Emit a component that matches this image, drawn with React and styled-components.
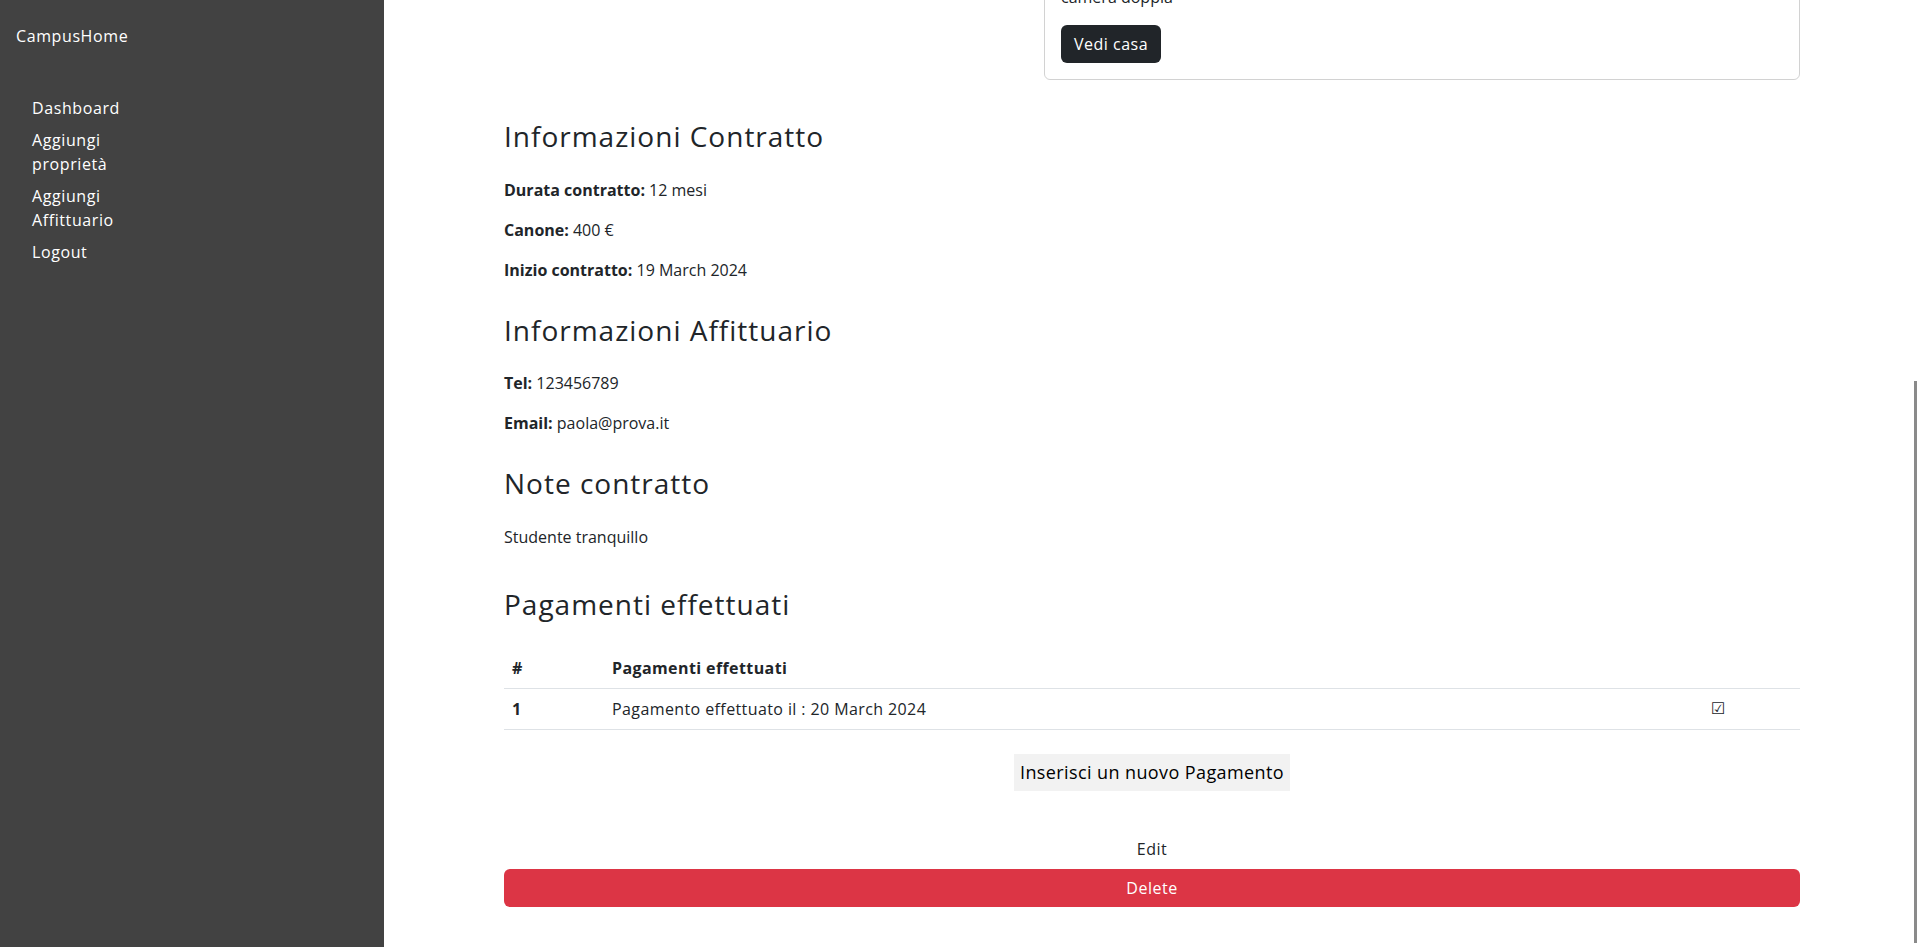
import React, { useLayoutEffect, useRef } from 'react';
import styled, { createGlobalStyle } from 'styled-components';

const GlobalStyle = createGlobalStyle`
  html, body {
    margin: 0;
    padding: 0;
    height: 100%;
  }
  body {
    font-family: "Open Sans", "DejaVu Sans", sans-serif;
    font-size: 16px;
    line-height: 1.5;
    color: #212529;
    background: #fff;
  }
  *, *::before, *::after {
    box-sizing: border-box;
  }
`;

const Layout = styled.div`
  position: relative;
  display: flex;
  height: 100vh;
  overflow: hidden;
`;

const Sidebar = styled.aside`
  flex: 0 0 384px;
  background: #424242;
  color: #fff;
  padding: 24px 16px;
  letter-spacing: 0.6px;
`;

const Brand = styled.div`
  font-size: 16px;
  line-height: 24px;
`;

const NavList = styled.ul`
  list-style: none;
  margin: 48px 0 0;
  padding: 0 0 0 16px;
  display: flex;
  flex-direction: column;
  gap: 8px;
`;

const NavLink = styled.a`
  display: block;
  max-width: 110px;
  color: #fff;
  text-decoration: none;
  line-height: 24px;
  cursor: pointer;
`;

const Main = styled.main`
  flex: 1;
  overflow-y: auto;
`;

/* thin overlay scroll indicator, as the reference shows it */
const ScrollThumb = styled.div`
  position: absolute;
  right: 3px;
  top: 381px;
  width: 3px;
  height: 562px;
  background: #8a8a8a;
  pointer-events: none;
`;

const Container = styled.div`
  max-width: 1320px;
  margin: 0 auto;
  padding: 24px 12px 40px;
`;

const TopRow = styled.div`
  display: grid;
  grid-template-columns: 1fr 756px;
  gap: 24px;
  margin-bottom: 40px;
`;

const PageTitle = styled.h1`
  font-size: 40px;
  line-height: 1.2;
  font-weight: 500;
  margin: 0 0 8px;
`;

const Subtitle = styled.p`
  margin: 0;
  color: #6c757d;
`;

const Card = styled.div`
  border: 1px solid rgba(0, 0, 0, 0.175);
  border-radius: 6px;
  overflow: hidden;
`;

const CardImage = styled.div`
  height: 400px;
  background: #e9ecef;
`;

const CardBody = styled.div`
  padding: 16px;
`;

const CardTitle = styled.h5`
  font-size: 20px;
  line-height: 1.2;
  font-weight: 500;
  margin: 0 0 8px;
`;

const CardText = styled.p`
  margin: 0 0 16px;
`;

const Button = styled.button`
  font-family: inherit;
  font-size: 16px;
  line-height: 24px;
  letter-spacing: 0.5px;
  padding: 6px 12px;
  border: 1px solid transparent;
  border-radius: 6px;
  cursor: pointer;
  background: ${p => (p.$variant === 'dark' ? '#212529' : p.$variant === 'danger' ? '#dc3545' : 'transparent')};
  color: ${p => (p.$variant === 'dark' || p.$variant === 'danger' ? '#fff' : '#212529')};
  width: ${p => (p.$block ? '100%' : 'auto')};
`;

const Section = styled.section`
  display: flex;
  flex-direction: column;
  & + & {
    margin-top: 16px;
  }
`;

const Heading = styled.h3`
  font-size: 28px;
  line-height: 1.2;
  font-weight: 500;
  letter-spacing: 1px;
  margin: 0 0 24px;
`;

const Para = styled.p`
  margin: 0 0 ${p => p.$mb || 16}px;
`;

const Table = styled.table`
  width: 100%;
  border-collapse: collapse;
  margin: 3px 0 24px;
  letter-spacing: 0.4px;

  th, td {
    padding: 8px;
    text-align: left;
    border-bottom: 1px solid #dee2e6;
    vertical-align: top;
  }
  th {
    font-weight: 700;
  }
`;

const CheckCell = styled.td`
  font-family: "DejaVu Sans", sans-serif;
  font-size: 16px;
`;

const Centered = styled.div`
  display: flex;
  justify-content: center;
`;

const AddButton = styled.button`
  font-family: inherit;
  font-size: 18px;
  line-height: 27px;
  letter-spacing: 0.4px;
  padding: 5px 6px;
  border: none;
  background: #f2f2f2;
  color: #000;
  cursor: pointer;
`;

const Actions = styled.div`
  display: flex;
  flex-direction: column;
  align-items: center;
  gap: 1px;
  margin-top: 39px;
`;

const navItems = ['Dashboard', 'Aggiungi proprietà', 'Aggiungi Affittuario', 'Logout'];

const pagamenti = [{ id: 1, data: '20 March 2024' }];

export default function App() {
  const mainRef = useRef(null);

  useLayoutEffect(() => {
    const el = mainRef.current;
    if (el) el.scrollTop = el.scrollHeight;
  }, []);

  return (
    <>
      <GlobalStyle />
      <Layout>
        <Sidebar>
          <Brand>CampusHome</Brand>
          <NavList>
            {navItems.map(item => (
              <li key={item}>
                <NavLink>{item}</NavLink>
              </li>
            ))}
          </NavList>
        </Sidebar>
        <Main ref={mainRef}>
          <Container>
            <TopRow>
              <div>
                <PageTitle>Contratto Paola Rossi</PageTitle>
                <Subtitle>Dettagli del contratto di affitto</Subtitle>
              </div>
              <Card>
                <CardImage />
                <CardBody>
                  <CardTitle>Appartamento Via Roma 12</CardTitle>
                  <CardText>Bologna, BO</CardText>
                  <CardText>camera doppia</CardText>
                  <Button $variant="dark">Vedi casa</Button>
                </CardBody>
              </Card>
            </TopRow>

            <Section>
              <Heading>Informazioni Contratto</Heading>
              <Para><b>Durata contratto:</b> 12 mesi</Para>
              <Para><b>Canone:</b> 400 €</Para>
              <Para><b>Inizio contratto:</b> 19 March 2024</Para>
            </Section>

            <Section>
              <Heading>Informazioni Affittuario</Heading>
              <Para><b>Tel:</b> 123456789</Para>
              <Para><b>Email:</b> paola@prova.it</Para>
            </Section>

            <Section>
              <Heading>Note contratto</Heading>
              <Para $mb={23}>Studente tranquillo</Para>
            </Section>

            <Section>
              <Heading>Pagamenti effettuati</Heading>
              <Table>
                <thead>
                  <tr>
                    <th style={{ width: 100 }}>#</th>
                    <th>Pagamenti effettuati</th>
                    <th style={{ width: 97 }}></th>
                  </tr>
                </thead>
                <tbody>
                  {pagamenti.map(p => (
                    <tr key={p.id}>
                      <th>{p.id}</th>
                      <td>Pagamento effettuato il : {p.data}</td>
                      <CheckCell>☑</CheckCell>
                    </tr>
                  ))}
                </tbody>
              </Table>
              <Centered>
                <AddButton>Inserisci un nuovo Pagamento</AddButton>
              </Centered>
              <Actions>
                <Button>Edit</Button>
                <Button $variant="danger" $block>Delete</Button>
              </Actions>
            </Section>
          </Container>
        </Main>
        <ScrollThumb />
      </Layout>
    </>
  );
}
